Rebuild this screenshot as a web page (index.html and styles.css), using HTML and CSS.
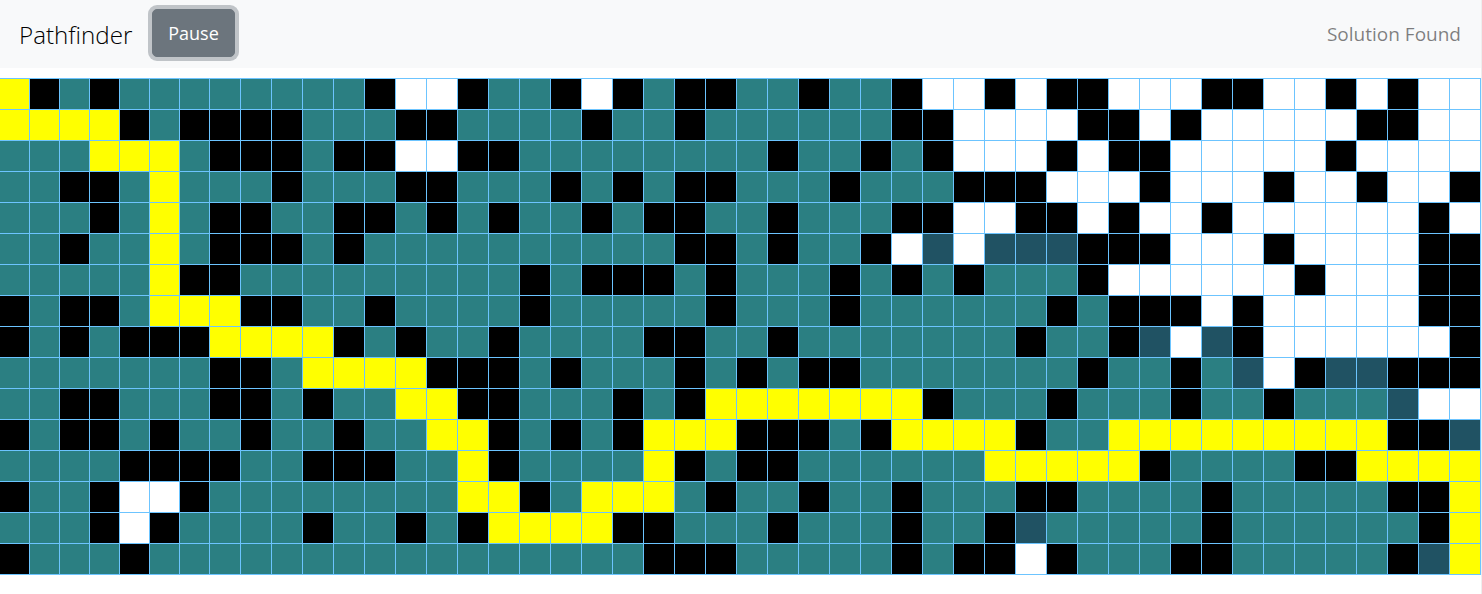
FILE: index.html
```html
<!DOCTYPE html>
<html lang="en">
<head>
    <meta charset="UTF-8">
    <meta name="viewport" content="width=device-width, initial-scale=1.0">
    <title>Pathfinder</title>
    <link rel="stylesheet" href="styles.css">
</head>
<body>
    <nav class="navbar">
        <span class="brand">Pathfinder</span>
        <button class="btn-pause">Pause</button>
        <span class="status">Solution Found</span>
    </nav>

    <div class="grid" id="grid"></div>

    <script src="script.js"></script>
</body>
</html>
```

FILE: styles.css
```css
body {
    margin: 0;
    width: 1481px;
    min-height: 100vh;
    border-right: 1px solid #eee;
    background-color: #fff;
    font-family: "Open Sans", "Noto Sans", sans-serif;
}

.navbar {
    display: flex;
    align-items: center;
    height: 68px;
    box-sizing: border-box;
    padding: 0 20px 2px 19px;
    background-color: #f8f9fa;
}

.brand {
    width: 133px;
    padding-top: 2px;
    font-size: 24.2px;
    font-weight: 300;
    color: #000;
}

.btn-pause {
    width: 83px;
    height: 48px;
    padding: 0;
    border: 1px solid #6c757d;
    border-radius: 5px;
    background-color: #6c757d;
    box-shadow: 0 0 0 4px rgba(108, 117, 125, 0.4);
    color: #fff;
    font-family: inherit;
    font-size: 18px;
}

.status {
    margin-left: auto;
    padding-top: 2px;
    font-size: 19px;
    color: rgba(0, 0, 0, 0.5);
}

.grid {
    display: grid;
    grid-template-columns: repeat(7, 30px) repeat(41, 31px);
    grid-auto-rows: 31px;
    margin-top: 10px;
    border-top: 1px solid #6cc4ff;
}

.cell {
    box-sizing: border-box;
    border-right: 1px solid #6cc4ff;
    border-bottom: 1px solid #6cc4ff;
    background-color: #2b7f82;
}

.cell.wall {
    background-color: #000;
}

.cell.open {
    background-color: #fff;
}

.cell.frontier {
    background-color: #205263;
}

.cell.path {
    background-color: #ff0;
}
```

FILE: script.js
```js
// . visited, # wall, W unvisited, D frontier, Y path
const rows = [
    "Y#.#........#WW#..#W#.##..#..#WW#W##WWW##WW#W#WW",
    "YYYY#.####...##....#..#......##WWWW##W#WWWWW##WW",
    "...YYY.###.##WW##........#..#.#WWW#W##WWWWW#WWWW",
    "..##.Y...#...##...#.#.##...#...###WWW#WWW#WW#WW#",
    "...#.Y.##..##.#.#..#.##..#...##WW##W#WW#WWWWWW#W",
    "..#..Y.###.#..........##.#..#WDWDDD###WWW#WWWW##",
    ".....Y##.........#.###.#...#.#.#...#WWWWWW#WWW##",
    "#.##.YYY##..#....#.....#...#......#.###W#WWWWW##",
    "#.#.###YYYY#.#..#....##..#.......#..#DWD#WWWWWW#",
    ".......##.YYYY###.#...#.#.##.......#..#.DW#DD###",
    "..##...##.#..YY##...#.#YYYYYYY#...#...#..#...DWW",
    "#.##.#..#..#..YY#.#.#YYY###.#YYYY#..YYYYYYYYY##D",
    "....####..###..Y#....Y#.##......YYYYY#....##YYYY",
    "#..#WW#........YY#.YYY.#..#..#...##....#.....##Y",
    "...#W#....#..#.#YYYY##...#...#..#D.....#......#Y",
    "#...#................###.....#.##W#...##.....#DY"
];

const kinds = { "#": "wall", "W": "open", "D": "frontier", "Y": "path" };
const grid = document.getElementById("grid");

rows.forEach(row => {
    for (const ch of row) {
        const cell = document.createElement("div");
        cell.className = "cell " + (kinds[ch] || "");
        grid.appendChild(cell);
    }
});
```
